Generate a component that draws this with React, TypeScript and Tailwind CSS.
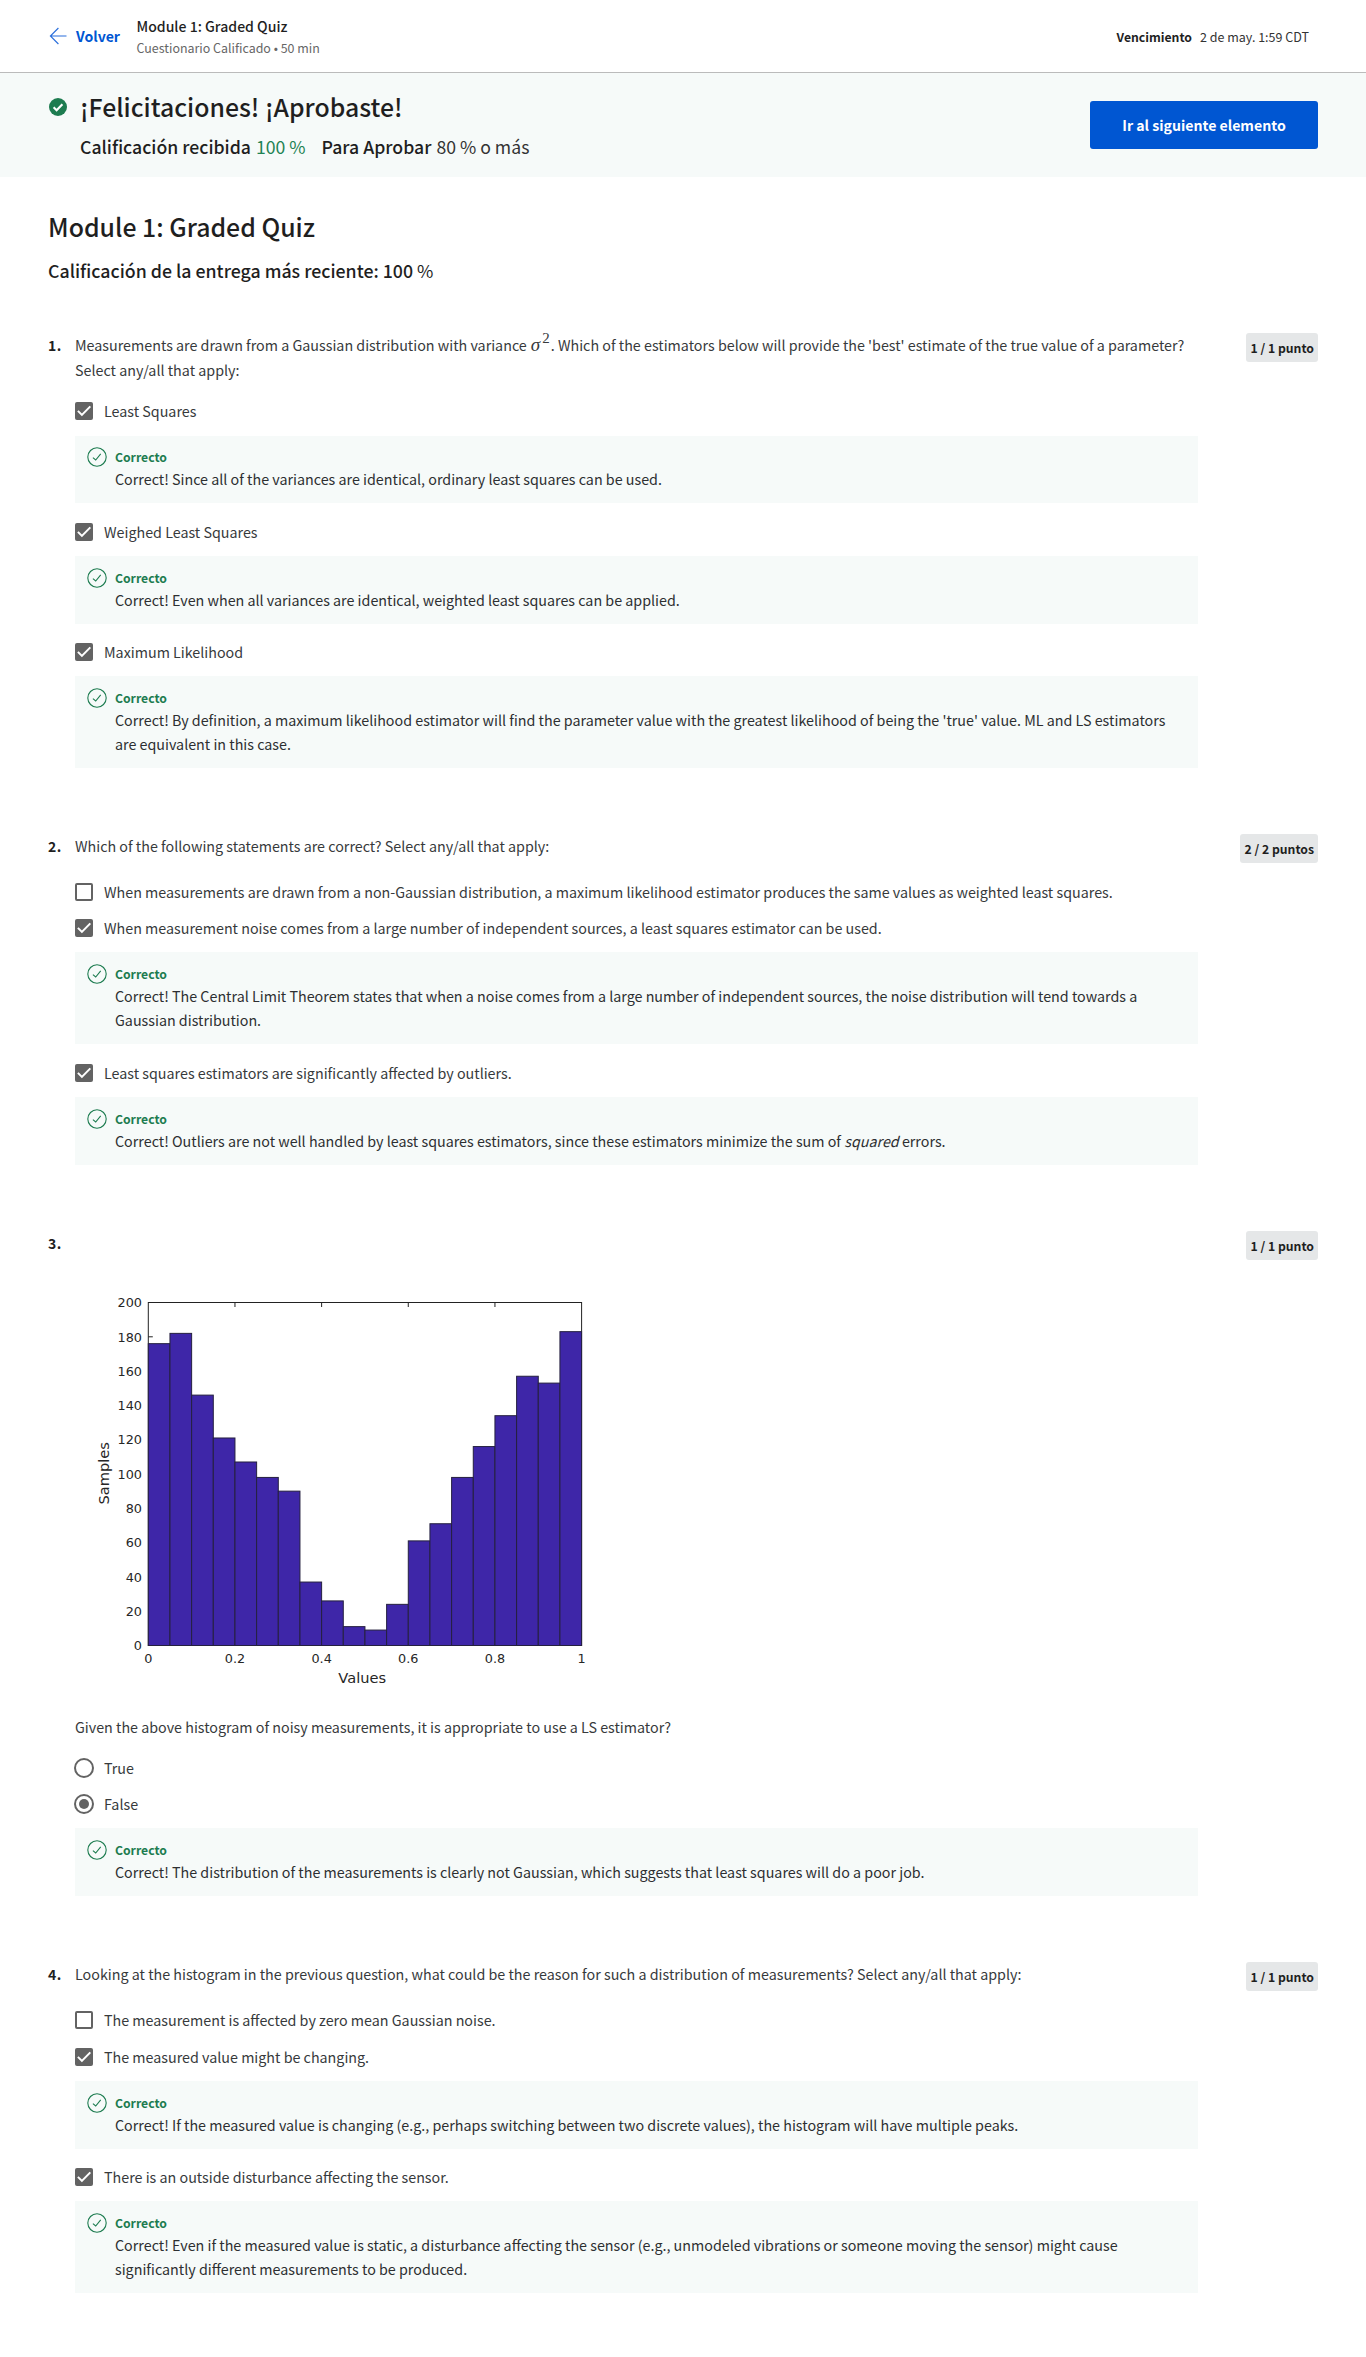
import type { ReactNode } from "react";

function BackArrow() {
  return (
    <svg width="18" height="18" viewBox="0 0 18 18" fill="none" stroke="#2a6fdc" strokeWidth="1.15">
      <path d="M9.4 1L1.4 9L9.4 17M1.4 9H17.5" />
    </svg>
  );
}

function PassedIcon() {
  return (
    <svg className="mt-[10px] shrink-0" width="18" height="18" viewBox="0 0 18 18" fill="none">
      <circle cx="9" cy="9" r="9" fill="#1d7c50" />
      <path d="M4.6 9.3L7.6 12.3L13.4 6.2" stroke="#fff" strokeWidth="2.1" />
    </svg>
  );
}

function CorrectIcon() {
  return (
    <svg className="shrink-0" width="20" height="20" viewBox="0 0 20 20" fill="none" stroke="#1d7c50">
      <circle cx="10" cy="10" r="9.2" strokeWidth="1.1" />
      <path d="M5.9 10.6L8.7 13L13.7 6.8" strokeWidth="1.1" />
    </svg>
  );
}

function Checkbox({ checked }: { checked: boolean }) {
  return checked ? (
    <span className="flex size-[18px] shrink-0 items-center justify-center rounded-[2px] bg-[#636363]">
      <svg width="18" height="18" viewBox="0 0 18 18" fill="none" stroke="#fff" strokeWidth="2">
        <path d="M2.9 8.9L6.9 12.9L15.3 4.4" />
      </svg>
    </span>
  ) : (
    <span className="size-[18px] shrink-0 rounded-[2px] border-2 border-[#636363] bg-white" />
  );
}

function Radio({ checked }: { checked: boolean }) {
  return (
    <span className="-ml-px flex size-5 shrink-0 items-center justify-center rounded-full border-2 border-[#636363]">
      {checked && <span className="size-2.5 rounded-full bg-[#636363]" />}
    </span>
  );
}

function Option({ checked, radio, children }: { checked: boolean; radio?: boolean; children: ReactNode }) {
  return (
    <div className="flex h-6 items-center text-[14.31px] leading-6 text-[#373a3c]">
      <span className="flex w-[29px]">{radio ? <Radio checked={checked} /> : <Checkbox checked={checked} />}</span>
      <span className="whitespace-nowrap">{children}</span>
    </div>
  );
}

function Feedback({ children }: { children: ReactNode }) {
  return (
    <div className="mt-[12.3px] mb-[16.3px] flex w-[1123px] gap-2 bg-[#f6faf9] px-3 pt-[11.7px] pb-[12.1px]">
      <CorrectIcon />
      <div>
        <div className="text-[12.2px] leading-5 font-bold text-[#1d7c50]">Correcto</div>
        <div className="text-[14.31px] leading-6 whitespace-nowrap text-[#2d2f31]">{children}</div>
      </div>
    </div>
  );
}

function Question({ n, score, className, children }: { n: number; score: string; className: string; children: ReactNode }) {
  return (
    <section className={`flex items-start ${className}`}>
      <div className="w-[27px] shrink-0 text-[14px] leading-6 font-bold tracking-[0.4px] text-[#1f1f1f]">{n}.</div>
      <div className="flex-1">{children}</div>
      <div className="h-[29px] rounded-[3px] bg-[#e5e7e8] px-1 text-[12.22px] leading-[30px] font-bold whitespace-nowrap text-[#1f1f1f]">
        {score}
      </div>
    </section>
  );
}

function Prompt({ children }: { children: ReactNode }) {
  return <div className="text-[14.31px] leading-6 whitespace-nowrap text-[#373a3c]">{children}</div>;
}

const samples = [176, 182, 146, 121, 107, 98, 90, 37, 26, 11, 9, 24, 61, 71, 98, 116, 134, 157, 153, 183];
const plot = { x: 73.3, y: 12.5, w: 433.3, h: 343 };

function Histogram() {
  const bar = plot.w / samples.length;
  const bottom = plot.y + plot.h;
  return (
    <svg width="540" height="405" viewBox="0 0 540 405" className="font-['DejaVu_Sans',sans-serif]" fill="#262626">
      <rect x={plot.x} y={plot.y} width={plot.w} height={plot.h} fill="#fff" stroke="#222" />
      {[0.2, 0.4, 0.6, 0.8].map((v) => (
        <path key={v} d={`M${plot.x + v * plot.w} ${plot.y}v4.5`} stroke="#222" />
      ))}
      <path d={`M${plot.x} ${bottom - 0.9 * plot.h}h4.5`} stroke="#222" />
      {samples.map((s, i) => {
        const h = (s / 200) * plot.h;
        return <rect key={i} x={plot.x + i * bar} y={bottom - h} width={bar} height={h} fill="#3e26a8" stroke="#25203f" />;
      })}
      {[0, 20, 40, 60, 80, 100, 120, 140, 160, 180, 200].map((v) => (
        <text key={v} x="67" y={bottom - (v / 200) * plot.h + 4.7} textAnchor="end" fontSize="12.8">
          {v}
        </text>
      ))}
      {[0, 0.2, 0.4, 0.6, 0.8, 1].map((v) => (
        <text key={v} x={plot.x + v * plot.w} y="373" textAnchor="middle" fontSize="12.8">
          {v}
        </text>
      ))}
      <text x="287.2" y="393" textAnchor="middle" fontSize="14.6">
        Values
      </text>
      <text transform="translate(34 183.3) rotate(-90)" textAnchor="middle" fontSize="14.6">
        Samples
      </text>
    </svg>
  );
}

export default function App() {
  return (
    <div className="h-[2357px] w-[1366px] overflow-hidden bg-white font-['Noto_Sans_CJK_JP','Noto_Sans_CJK_SC','Noto_Sans',sans-serif] text-[#1f1f1f]">
      <header className="flex h-[73px] border-b border-[#bbb] pr-[57px] pl-[49px]">
        <a className="flex h-[72px] w-[87.5px] items-center gap-[9px] text-[14.08px] leading-6 font-bold text-[#0056d2]">
          <BackArrow />
          Volver
        </a>
        <div className="flex-1 pt-[14px]">
          <div className="text-[14.06px] leading-6 font-medium">Module 1: Graded Quiz</div>
          <div className="text-[12.45px] leading-5 text-[#666]">Cuestionario Calificado • 50 min</div>
        </div>
        <div className="flex gap-2 pt-[25px] text-[12.24px] leading-6">
          <span className="font-bold">Vencimiento</span>
          <span className="text-[12.51px] text-[#333]">2 de may. 1:59 CDT</span>
        </div>
      </header>

      <div className="flex h-[104px] items-start bg-[#f6faf9] pr-12 pl-[49px]">
        <div className="flex flex-1 gap-[13px] pt-[15px]">
          <PassedIcon />
          <div>
            <h1 className="text-[24.82px] leading-9 font-medium">¡Felicitaciones! ¡Aprobaste!</h1>
            <div className="mt-[9px] flex text-[17.66px] leading-7">
              <span className="font-medium">Calificación recibida</span>
              <span className="ml-[5px] text-[#1f8354]">100 %</span>
              <span className="ml-4 font-medium">Para Aprobar</span>
              <span className="ml-[5px] text-[#333]">80 % o más</span>
            </div>
          </div>
        </div>
        <button className="mt-7 h-12 w-[228px] rounded-[3px] bg-[#0056d2] pt-0.5 text-[14.11px] font-bold text-white">
          Ir al siguiente elemento
        </button>
      </div>

      <main className="pt-[31px] pr-12 pl-12">
        <h2 className="text-[24.86px] leading-9 font-medium">Module 1: Graded Quiz</h2>
        <div className="mt-3 mb-[49px] text-[17.76px] leading-7 font-medium">
          Calificación de la entrega más reciente: 100 <span className="font-normal">%</span>
        </div>

        <Question n={1} score="1 / 1 punto" className="h-[501px]">
          <Prompt>
            <div className="flex h-[25.4px]">
              <span>Measurements are drawn from a Gaussian distribution with variance</span>
              <span className="ml-1 flex w-5 font-['Liberation_Serif',serif]">
                <span className="text-[19px] italic">σ</span>
                <span className="-mt-[7px] ml-[2px] text-[15px]">2</span>
              </span>
              <span>. Which of the estimators below will provide the 'best' estimate of the true value of a parameter?</span>
            </div>
            <div className="mb-[16.9px]">Select any/all that apply:</div>
          </Prompt>
          <Option checked>Least Squares</Option>
          <Feedback>Correct! Since all of the variances are identical, ordinary least squares can be used.</Feedback>
          <Option checked>Weighed Least Squares</Option>
          <Feedback>Correct! Even when all variances are identical, weighted least squares can be applied.</Feedback>
          <Option checked>Maximum Likelihood</Option>
          <Feedback>
            Correct! By definition, a maximum likelihood estimator will find the parameter value with the greatest likelihood of being the 'true' value. ML and LS estimators
            <br />
            are equivalent in this case.
          </Feedback>
        </Question>

        <Question n={2} score="2 / 2 puntos" className="h-[397px]">
          <Prompt>
            <div className="mb-[22px]">Which of the following statements are correct? Select any/all that apply:</div>
          </Prompt>
          <Option checked={false}>
            When measurements are drawn from a non-Gaussian distribution, a maximum likelihood estimator produces the same values as weighted least squares.
          </Option>
          <div className="h-[12.1px]" />
          <Option checked>When measurement noise comes from a large number of independent sources, a least squares estimator can be used.</Option>
          <Feedback>
            Correct! The Central Limit Theorem states that when a noise comes from a large number of independent sources, the noise distribution will tend towards a
            <br />
            Gaussian distribution.
          </Feedback>
          <div className="pt-[0.5px]">
            <Option checked>Least squares estimators are significantly affected by outliers.</Option>
          </div>
          <Feedback>
            Correct! Outliers are not well handled by least squares estimators, since these estimators minimize the sum of <em>squared</em> errors.
          </Feedback>
        </Question>

        <Question n={3} score="1 / 1 punto" className="h-[731px]">
          <div className="h-[484px] pt-[59px]">
            <Histogram />
          </div>
          <Prompt>
            <div className="mb-[17px]">Given the above histogram of noisy measurements, it is appropriate to use a LS estimator?</div>
          </Prompt>
          <Option radio checked={false}>
            True
          </Option>
          <div className="h-3" />
          <Option radio checked>
            False
          </Option>
          <Feedback>Correct! The distribution of the measurements is clearly not Gaussian, which suggests that least squares will do a poor job.</Feedback>
        </Question>

        <Question n={4} score="1 / 1 punto" className="h-[395px]">
          <Prompt>
            <div className="mb-[22.45px]">
              Looking at the histogram in the previous question, what could be the reason for such a distribution of measurements? Select any/all that apply:
            </div>
          </Prompt>
          <Option checked={false}>The measurement is affected by zero mean Gaussian noise.</Option>
          <div className="h-[12.1px]" />
          <Option checked>The measured value might be changing.</Option>
          <Feedback>
            Correct! If the measured value is changing (e.g., perhaps switching between two discrete values), the histogram will have multiple peaks.
          </Feedback>
          <Option checked>There is an outside disturbance affecting the sensor.</Option>
          <Feedback>
            Correct! Even if the measured value is static, a disturbance affecting the sensor (e.g., unmodeled vibrations or someone moving the sensor) might cause
            <br />
            significantly different measurements to be produced.
          </Feedback>
        </Question>
      </main>
    </div>
  );
}
